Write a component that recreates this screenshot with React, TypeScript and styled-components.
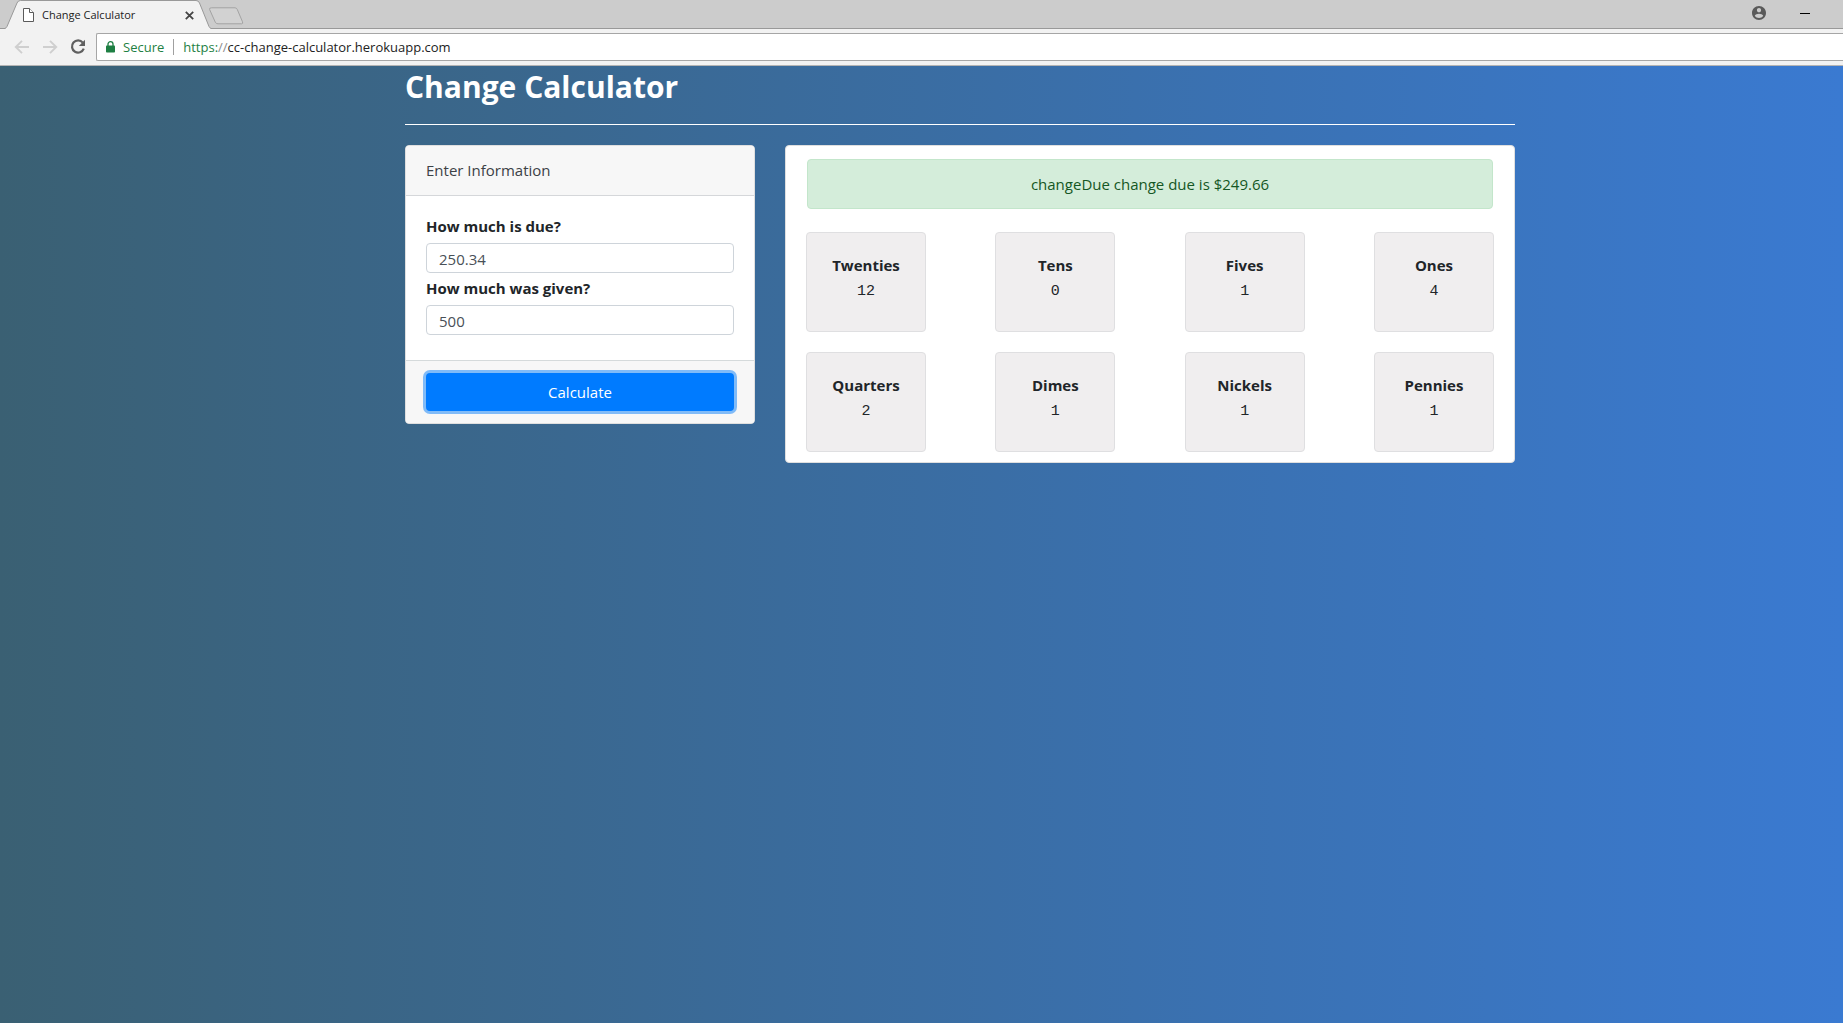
import React, { useState } from "react";
import styled, { createGlobalStyle } from "styled-components";

const GlobalStyle = createGlobalStyle`
  *, *::before, *::after { box-sizing: border-box; }
  html, body, #root { height: 100%; }
  body {
    margin: 0;
    font-family: "Open Sans", "Noto Sans", sans-serif;
    font-size: 15px;
    line-height: 24px;
    color: #212529;
  }
  h1, p { margin: 0; }
  button, input { font: inherit; }
`;

const Window = styled.div`
  display: flex;
  flex-direction: column;
  min-height: 100%;
`;

/* ---------- browser frame ---------- */

const TabStrip = styled.div`
  display: flex;
  align-items: flex-end;
  height: 29px;
  padding-left: 5px;
  background: #cccccc;
  box-shadow: inset 0 -1px #999999;
`;

const Tab = styled.div`
  position: relative;
  display: flex;
  align-items: center;
  width: 206px;
  height: 29px;
  padding: 1px 17px 0 18px;
  font-size: 11px;
  line-height: 16px;
  color: #222222;
`;

const TabShape = styled.svg`
  position: absolute;
  inset: 0;
`;

const TabIcon = styled.svg`
  position: relative;
  flex: none;
  margin-right: 8px;
`;

const TabTitle = styled.span`
  position: relative;
  flex: 1;
  white-space: nowrap;
`;

const IconButton = styled.button`
  position: relative;
  display: flex;
  align-items: center;
  justify-content: center;
  padding: 0;
  border: 0;
  background: none;
  color: inherit;
`;

const NewTab = styled(IconButton)`
  align-self: center;
  margin-top: 2px;
  margin-left: -3px;
`;

const WindowControls = styled.div`
  display: flex;
  align-items: center;
  align-self: stretch;
  gap: 34px;
  margin-left: auto;
  padding: 0 33px 3px 0;
`;

const Toolbar = styled.div`
  display: flex;
  align-items: center;
  height: 37px;
  padding-left: 14px;
  background: #f2f2f2;
  border-bottom: 1px solid #b4b4b4;
`;

const NavButtons = styled.div`
  display: flex;
  gap: 12px;
  padding-right: 10px;
  color: #606060;
`;

const AddressBar = styled.div`
  display: flex;
  align-items: center;
  flex: 1;
  height: 28px;
  padding-left: 9px;
  background: #ffffff;
  border: 1px solid #a6a6a6;
  border-right: 0;
  border-radius: 2px 0 0 2px;
  font-size: 13px;
  line-height: 18px;
  color: #222222;
  white-space: nowrap;
`;

const Secure = styled.span`
  margin-left: 8px;
  padding-right: 9px;
  border-right: 1px solid #a0a0a0;
  margin-right: 9px;
  color: #1e7f43;
  line-height: 16px;
`;

const Scheme = styled.span`
  color: #1e7f43;
`;

const Slashes = styled.span`
  color: #8c8c8c;
`;

/* ---------- page ---------- */

const Page = styled.main`
  flex: 1;
  display: grid;
  grid-template-columns: minmax(15px, 405fr) minmax(0, 1110px) minmax(15px, 328fr);
  align-items: start;
  background: linear-gradient(to right, #3a6073, #3a7bd5 104%);
`;

const Content = styled.div`
  grid-column: 2;
`;

const Title = styled.h1`
  padding: 2px 0 18px;
  border-bottom: 1px solid #ffffff;
  color: #ffffff;
  font-size: 30px;
  line-height: 38px;
  font-weight: 700;
`;

const Columns = styled.div`
  display: grid;
  grid-template-columns: 350fr 730fr;
  gap: 30px;
  align-items: start;
  padding-top: 20px;
`;

const Card = styled.section`
  background: #ffffff;
  border: 1px solid #dfdfdf;
  border-radius: 4px;
`;

const CardHeader = styled.div`
  padding: 12px 20px 13px;
  background: #f7f7f7;
  border-bottom: 1px solid #d5d7da;
  border-radius: 3px 3px 0 0;
  color: #3c4146;
`;

const CardBody = styled.div`
  padding: 15px 20px 25px;
`;

const CardFooter = styled.div`
  padding: 12px 20px;
  background: #f7f7f7;
  border-top: 1px solid #d5dadb;
  border-radius: 0 0 3px 3px;
`;

const Label = styled.label`
  display: block;
  padding: 3px 0 5px;
  font-weight: 700;
`;

const Input = styled.input`
  display: block;
  width: 100%;
  height: 30px;
  padding: 2px 12px 0;
  border: 1px solid #ced4da;
  border-radius: 4px;
  background: #ffffff;
  color: #495057;
`;

const SubmitButton = styled.button`
  display: block;
  width: 100%;
  height: 38px;
  padding: 0 12px;
  border: 0;
  border-radius: 4px;
  background: #007bff;
  box-shadow: 0 0 0 3px #80bbf8;
  color: #ffffff;
`;

const Results = styled(Card)`
  padding: 13px 20px 10px;
`;

const Alert = styled.p`
  margin: 0 1px 23px;
  padding: 12px 20px;
  border: 1px solid #c3e6cb;
  border-radius: 4px;
  background: #d4edda;
  color: #155724;
  text-align: center;
`;

const Coins = styled.div`
  display: grid;
  grid-template-columns: repeat(4, 120px);
  justify-content: space-between;
  row-gap: 20px;
`;

const Coin = styled.div`
  display: flex;
  flex-direction: column;
  gap: 3px;
  height: 100px;
  padding-top: 20px;
  border: 1px solid #dfdfe1;
  border-radius: 4px;
  background: #f0eeef;
  text-align: center;
`;

const CoinName = styled.p`
  font-weight: 700;
`;

const CoinCount = styled.p`
  font-family: "Liberation Mono", monospace;
`;

const coins = [
  { name: "Twenties", count: 12 },
  { name: "Tens", count: 0 },
  { name: "Fives", count: 1 },
  { name: "Ones", count: 4 },
  { name: "Quarters", count: 2 },
  { name: "Dimes", count: 1 },
  { name: "Nickels", count: 1 },
  { name: "Pennies", count: 1 },
];

function BrowserFrame() {
  return (
    <header>
      <TabStrip>
        <Tab>
          <TabShape width="206" height="29" viewBox="0 0 206 29" aria-hidden="true">
            <path d="M0 29V28.500Q1.200 28 2 26.500L12 3Q13 .5 15.500 .5H191Q193.500 .5 194.500 3L204 26.500Q204.800 28 206 28.500V29Z" fill="#f2f2f2" />
            <path d="M0 28.500Q1.200 28 2 26.500L12 3Q13 .5 15.500 .5H191Q193.500 .5 194.500 3L204 26.500Q204.800 28 206 28.500" fill="none" stroke="#999999" />
          </TabShape>
          <TabIcon width="11" height="14" viewBox="0 0 11 14" fill="#ffffff" stroke="#5a5a5a" aria-hidden="true">
            <path d="M.5 .5H6.500L10.500 4.500V13.500H.5Z" />
            <path d="M6.500 .5V4.500H10.500" />
          </TabIcon>
          <TabTitle>Change Calculator</TabTitle>
          <IconButton aria-label="Close tab">
            <svg width="9" height="9" viewBox="0 0 9 9" stroke="#444444" strokeWidth="1.8">
              <path d="M.8 .8L8.200 8.200M8.200 .8L.8 8.200" />
            </svg>
          </IconButton>
        </Tab>
        <NewTab aria-label="New tab">
          <svg width="36" height="18" viewBox="0 0 36 18" fill="#d2d2d2" stroke="#a3a3a3">
            <path d="M3.500 .8H27Q28.500 .8 29.200 2.300L34.500 14.800Q35.300 16.800 33.500 16.800H10Q8 16.800 7.300 15.200L1.600 2.500Q1 .8 3.500 .8Z" />
          </svg>
        </NewTab>
        <WindowControls>
          <IconButton aria-label="Profile">
            <svg width="14" height="14" viewBox="2 2 20 20" fill="#5a5a5a">
              <path d="M12 2C6.480 2 2 6.480 2 12s4.480 10 10 10 10-4.480 10-10S17.520 2 12 2zm0 3c1.660 0 3 1.340 3 3s-1.340 3-3 3-3-1.340-3-3 1.340-3 3-3zm0 14.200c-2.500 0-4.710-1.280-6-3.220.030-1.990 4-3.080 6-3.080 1.990 0 5.970 1.090 6 3.080-1.290 1.940-3.500 3.220-6 3.220z" />
            </svg>
          </IconButton>
          <IconButton aria-label="Minimize">
            <svg width="10" height="11" viewBox="0 0 10 11" stroke="#000000">
              <path d="M0 5.500H10" />
            </svg>
          </IconButton>
        </WindowControls>
      </TabStrip>
      <Toolbar>
        <NavButtons>
          <IconButton aria-label="Back" disabled>
            <svg width="16" height="16" viewBox="0 0 16 16" fill="none" stroke="#cfcfcf" strokeWidth="1.900">
              <path d="M15 8H2.500M8 1.800L1.800 8L8 14.200" />
            </svg>
          </IconButton>
          <IconButton aria-label="Forward" disabled>
            <svg width="16" height="16" viewBox="0 0 16 16" fill="none" stroke="#cfcfcf" strokeWidth="1.900">
              <path d="M1 8H13.500M8 1.800L14.200 8L8 14.200" />
            </svg>
          </IconButton>
          <IconButton aria-label="Reload">
            <svg width="16" height="16" viewBox="0 0 16 16" fill="none" stroke="currentColor" strokeWidth="2.200">
              <path d="M12.800 3.600A6.100 6.100 0 1 0 13.800 9.700" />
              <path d="M15 .8V7H8.800Z" fill="currentColor" stroke="none" />
            </svg>
          </IconButton>
        </NavButtons>
        <AddressBar>
          <svg width="9" height="12" viewBox="0 0 9 12" aria-hidden="true">
            <rect y="4.500" width="9" height="7" rx=".8" fill="#1e7f43" />
            <path d="M2 5V3A2.500 2.300 0 0 1 7 3V5" fill="none" stroke="#1e7f43" strokeWidth="1.300" />
          </svg>
          <Secure>Secure</Secure>
          <Scheme>https:</Scheme>
          <Slashes>//</Slashes>
          <span>cc-change-calculator.herokuapp.com</span>
        </AddressBar>
      </Toolbar>
    </header>
  );
}

export default function App() {
  const [due, setDue] = useState("250.34");
  const [given, setGiven] = useState("500");

  return (
    <Window>
      <GlobalStyle />
      <BrowserFrame />
      <Page>
        <Content>
          <Title>Change Calculator</Title>
          <Columns>
            <Card as="form" onSubmit={(e: React.FormEvent) => e.preventDefault()}>
              <CardHeader>Enter Information</CardHeader>
              <CardBody>
                <Label htmlFor="amount-due">How much is due?</Label>
                <Input id="amount-due" value={due} onChange={(e) => setDue(e.target.value)} />
                <Label htmlFor="amount-given">How much was given?</Label>
                <Input id="amount-given" value={given} onChange={(e) => setGiven(e.target.value)} />
              </CardBody>
              <CardFooter>
                <SubmitButton type="submit">Calculate</SubmitButton>
              </CardFooter>
            </Card>
            <Results>
              <Alert>changeDue change due is $249.66</Alert>
              <Coins>
                {coins.map((coin) => (
                  <Coin key={coin.name}>
                    <CoinName>{coin.name}</CoinName>
                    <CoinCount>{coin.count}</CoinCount>
                  </Coin>
                ))}
              </Coins>
            </Results>
          </Columns>
        </Content>
      </Page>
    </Window>
  );
}
